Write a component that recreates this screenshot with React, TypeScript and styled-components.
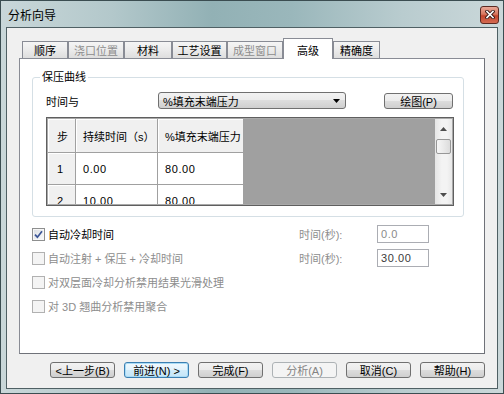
import React from 'react'
import styled, { createGlobalStyle, css } from 'styled-components'

const GlobalStyle = createGlobalStyle`
  html, body {
    margin: 0;
    padding: 0;
    background: #ffffff;
  }

  body {
    color: #000000;
    font-family: 'Liberation Sans', 'Noto Sans CJK SC', sans-serif;
    font-size: 11px;
  }
`

const Window = styled.div`
  background: linear-gradient(
    90deg,
    #c9d7d9 0%,
    #b3c8cb 22%,
    #92b1b5 42%,
    #9ab7bb 58%,
    #b9cccf 80%,
    #cbd8da 100%
  );
  border: 1px solid #3b4d51;
  box-sizing: border-box;
  display: flex;
  flex-direction: column;
  height: 394px;
  padding: 0 5px 4px 5px;
  width: 504px;
`

const TitleBar = styled.div`
  align-items: center;
  display: flex;
  flex-shrink: 0;
  height: 26px;
  justify-content: space-between;
  padding-left: 2px;
`

const TitleText = styled.div`
  font-family: 'Noto Sans CJK SC', sans-serif;
  font-size: 12px;
`

const CloseButton = styled.div`
  align-items: center;
  background: linear-gradient(
    180deg,
    #e9a897 0%,
    #d7775f 45%,
    #c3452d 55%,
    #d46b52 100%
  );
  border: 1px solid #5b2a22;
  border-radius: 3px;
  box-sizing: border-box;
  display: flex;
  height: 18px;
  justify-content: center;
  margin-right: -1px;
  margin-top: 1px;
  width: 19px;
`

const Client = styled.div`
  background: #f0f0f0;
  border: 1px solid #4f6064;
  display: flex;
  flex: 1;
  flex-direction: column;
  padding: 10px 12px 0 12px;
`

const TabStrip = styled.div`
  align-items: flex-end;
  display: flex;
  flex-shrink: 0;
  height: 20px;
  padding-left: 3px;
`

const Tab = styled.div<{ $w: number; $active?: boolean; $disabled?: boolean }>`
  align-items: center;
  background: linear-gradient(180deg, #f5f5f5 0%, #ebebeb 50%, #dedede 100%);
  border: 1px solid #898c95;
  border-bottom: none;
  box-sizing: border-box;
  color: ${p => (p.$disabled ? '#8d8d8d' : '#000000')};
  display: flex;
  height: 17px;
  justify-content: center;
  width: ${p => p.$w}px;

  ${p =>
    p.$active &&
    css`
      background: #ffffff;
      height: 21px;
      margin-bottom: -1px;
      padding-top: 2px;
      position: relative;
      z-index: 2;
    `}
`

const Panel = styled.div`
  background: #ffffff;
  border: 1px solid #898c95;
  border-bottom-color: #6f7279;
  border-right-color: #6f7279;
  box-sizing: border-box;
  display: flex;
  flex-direction: column;
  height: 296px;
  padding: 18px 20px 0 12px;
  position: relative;
  z-index: 1;
`

const GroupBox = styled.div`
  border: 1px solid #d5dfe5;
  border-radius: 3px;
  box-sizing: border-box;
  height: 140px;
  padding: 14px 9px 0 13px;
  position: relative;
`

const GroupLegend = styled.span`
  background: #ffffff;
  left: 7px;
  line-height: 14px;
  padding: 0 2px;
  position: absolute;
  top: -8px;
`

const ControlRow = styled.div`
  align-items: center;
  display: flex;
  height: 17px;
`

const FieldLabel = styled.div`
  width: 112px;
`

const Combo = styled.div`
  align-items: center;
  background: linear-gradient(180deg, #f2f2f2 0%, #ebebeb 50%, #dddddd 50%, #cfcfcf 100%);
  border: 1px solid #707070;
  border-radius: 3px;
  box-sizing: border-box;
  display: flex;
  height: 17px;
  justify-content: space-between;
  padding: 0 5px 0 4px;
  width: 188px;
`

const PushButton = styled.div<{ $w?: number; $focused?: boolean; $disabled?: boolean }>`
  align-items: center;
  background: linear-gradient(180deg, #f2f2f2 0%, #ebebeb 50%, #dddddd 50%, #cfcfcf 100%);
  border: 1px solid #707070;
  border-radius: 3px;
  box-sizing: border-box;
  display: flex;
  height: 16px;
  justify-content: center;
  white-space: nowrap;
  width: ${p => p.$w ?? 65}px;

  ${p =>
    p.$focused &&
    css`
      background: linear-gradient(180deg, #f1f9fe 0%, #e3f3fc 50%, #d2ecfa 50%, #c4e5f7 100%);
      border-color: #3c7fb1;
      box-shadow: inset 0 0 0 1px #a9dcf6;
    `}

  ${p =>
    p.$disabled &&
    css`
      background: #f4f4f4;
      border-color: #adb2b5;
      color: #838383;
    `}
`

const DrawButton = styled(PushButton)`
  margin-left: auto;
  margin-right: 1px;
`

const Grid = styled.div`
  border: 1px solid #5f5f5f;
  box-shadow: inset 0 0 0 1px #a9a9a9;
  box-sizing: border-box;
  display: flex;
  height: 89px;
  margin-top: 8px;
  padding: 1px;
`

const GridTable = styled.div`
  display: grid;
  grid-template-columns: 28px 82px 86px;
  grid-template-rows: 34px 32px 32px;
  overflow: hidden;
`

const Cell = styled.div<{ $head?: boolean; $num?: boolean; $indent?: number }>`
  align-items: center;
  background: ${p => (p.$head ? '#f0f0f0' : '#ffffff')};
  border-bottom: 1px solid #a0a0a0;
  border-right: 1px solid #a0a0a0;
  box-shadow: ${p => (p.$head ? 'inset 1px 1px 0 #ffffff' : 'none')};
  display: flex;
  letter-spacing: ${p => (p.$num ? '0.6px' : '0')};
  overflow: hidden;
  padding-left: ${p => p.$indent ?? 7}px;
  white-space: nowrap;
`

const GrayFill = styled.div`
  background: #a0a0a0;
  flex: 1;
`

const ScrollBar = styled.div`
  align-items: center;
  background: linear-gradient(90deg, #e5e5e5 0%, #f3f3f3 40%, #f3f3f3 70%, #e8e8e8 100%);
  display: flex;
  flex-direction: column;
  width: 17px;
`

const ScrollArrow = styled.div`
  align-items: center;
  display: flex;
  height: 19px;
  justify-content: center;
`

const ScrollThumb = styled.div`
  background: linear-gradient(90deg, #f6f6f6 0%, #eaeaea 50%, #dcdcdc 100%);
  border: 1px solid #979797;
  border-radius: 2px;
  box-sizing: border-box;
  height: 15px;
  margin-top: 1px;
  width: 15px;
`

const ScrollTrack = styled.div`
  flex: 1;
`

const OptionList = styled.div`
  display: flex;
  flex-direction: column;
  margin-top: 5px;
`

const OptionRow = styled.div`
  align-items: center;
  display: grid;
  grid-template-columns: 267px 78px 52px;
  height: 24px;
`

const OptionCheck = styled.div<{ $disabled?: boolean }>`
  align-items: center;
  color: ${p => (p.$disabled ? '#8d8d8d' : '#000000')};
  display: flex;
  gap: 3px;
`

const CheckBox = styled.div<{ $disabled?: boolean }>`
  align-items: center;
  background: ${p =>
    p.$disabled
      ? '#f4f4f4'
      : 'linear-gradient(135deg, #d9dce0 0%, #eef0f2 60%, #fbfbfb 100%)'};
  border: 1px solid ${p => (p.$disabled ? '#b1b1b1' : '#8e8f8f')};
  box-shadow: inset 0 0 0 1px ${p => (p.$disabled ? '#f4f4f4' : '#f7f7f7')};
  box-sizing: border-box;
  display: flex;
  height: 13px;
  justify-content: center;
  width: 13px;
`

const SideLabel = styled.div`
  color: #8d8d8d;
`

const TextBox = styled.div<{ $dim?: boolean }>`
  align-items: center;
  background: #ffffff;
  border: 1px solid #abadb3;
  box-sizing: border-box;
  color: ${p => (p.$dim ? '#8a8a8a' : '#3a3a3a')};
  display: flex;
  height: 18px;
  letter-spacing: 0.6px;
  padding-left: 3px;
`

const ButtonBar = styled.div`
  display: flex;
  justify-content: space-between;
  margin-top: 8px;
  padding-left: 31px;
`

const tabs = [
  { label: '顺序', w: 46 },
  { label: '浇口位置', w: 56, disabled: true },
  { label: '材料', w: 48 },
  { label: '工艺设置', w: 55 },
  { label: '成型窗口', w: 56, disabled: true },
  { label: '高级', w: 50, active: true },
  { label: '精确度', w: 47 },
]

const rows = [
  ['1', '0.00', '80.00'],
  ['2', '10.00', '80.00'],
]

const options = [
  { label: '自动冷却时间', checked: true, side: '时间(秒):', value: '0.0', dim: true },
  { label: '自动注射 + 保压 + 冷却时间', disabled: true, side: '时间(秒):', value: '30.00' },
  { label: '对双层面冷却分析禁用结果光滑处理', disabled: true },
  { label: '对 3D 翘曲分析禁用聚合', disabled: true },
]

const buttons = [
  { label: '<上一步(B)' },
  { label: '前进(N) >', focused: true },
  { label: '完成(F)' },
  { label: '分析(A)', disabled: true },
  { label: '取消(C)' },
  { label: '帮助(H)' },
]

const CloseGlyph = () => (
  <svg width='10' height='9' viewBox='0 0 10 9'>
    <path d='M2 1.5 L8 7.5 M8 1.5 L2 7.5' stroke='#3a1a16' strokeWidth='3.4' strokeLinecap='square' />
    <path d='M2 1.5 L8 7.5 M8 1.5 L2 7.5' stroke='#ffffff' strokeWidth='1.6' strokeLinecap='square' />
  </svg>
)

const Triangle = ({ up, color = '#4d4d4d' }: { up?: boolean; color?: string }) => (
  <svg width='7' height='4' viewBox='0 0 7 4'>
    <polygon points={up ? '3.5,0 7,4 0,4' : '0,0 7,0 3.5,4'} fill={color} />
  </svg>
)

const Check = () => (
  <svg width='9' height='9' viewBox='0 0 9 9'>
    <path d='M1 4.6 L3.4 7.2 L8 1.2' stroke='#3c5596' strokeWidth='1.7' fill='none' />
  </svg>
)

const HoldCurve = () => (
  <GroupBox>
    <GroupLegend>保压曲线</GroupLegend>
    <ControlRow>
      <FieldLabel>时间与</FieldLabel>
      <Combo>
        <span>%填充末端压力</span>
        <Triangle color='#000000' />
      </Combo>
      <DrawButton $w={69}>绘图(P)</DrawButton>
    </ControlRow>
    <Grid>
      <GridTable>
        <Cell $head $indent={9}>步</Cell>
        <Cell $head>持续时间（s）</Cell>
        <Cell $head>%填充末端压力</Cell>
        {rows.map(row => (
          <React.Fragment key={row[0]}>
            <Cell $head $indent={9}>{row[0]}</Cell>
            <Cell $num>{row[1]}</Cell>
            <Cell $num>{row[2]}</Cell>
          </React.Fragment>
        ))}
      </GridTable>
      <GrayFill />
      <ScrollBar>
        <ScrollArrow>
          <Triangle up />
        </ScrollArrow>
        <ScrollThumb />
        <ScrollTrack />
        <ScrollArrow>
          <Triangle />
        </ScrollArrow>
      </ScrollBar>
    </Grid>
  </GroupBox>
)

const Options = () => (
  <OptionList>
    {options.map(option => (
      <OptionRow key={option.label}>
        <OptionCheck $disabled={option.disabled}>
          <CheckBox $disabled={option.disabled}>{option.checked && <Check />}</CheckBox>
          <span>{option.label}</span>
        </OptionCheck>
        {option.side && <SideLabel>{option.side}</SideLabel>}
        {option.value && <TextBox $dim={option.dim}>{option.value}</TextBox>}
      </OptionRow>
    ))}
  </OptionList>
)

const App = () => (
  <>
    <GlobalStyle />
    <Window>
      <TitleBar>
        <TitleText>分析向导</TitleText>
        <CloseButton>
          <CloseGlyph />
        </CloseButton>
      </TitleBar>
      <Client>
        <TabStrip>
          {tabs.map(tab => (
            <Tab key={tab.label} $w={tab.w} $active={tab.active} $disabled={tab.disabled}>
              {tab.label}
            </Tab>
          ))}
        </TabStrip>
        <Panel>
          <HoldCurve />
          <Options />
        </Panel>
        <ButtonBar>
          {buttons.map(button => (
            <PushButton key={button.label} $focused={button.focused} $disabled={button.disabled}>
              {button.label}
            </PushButton>
          ))}
        </ButtonBar>
      </Client>
    </Window>
  </>
)

export default App
